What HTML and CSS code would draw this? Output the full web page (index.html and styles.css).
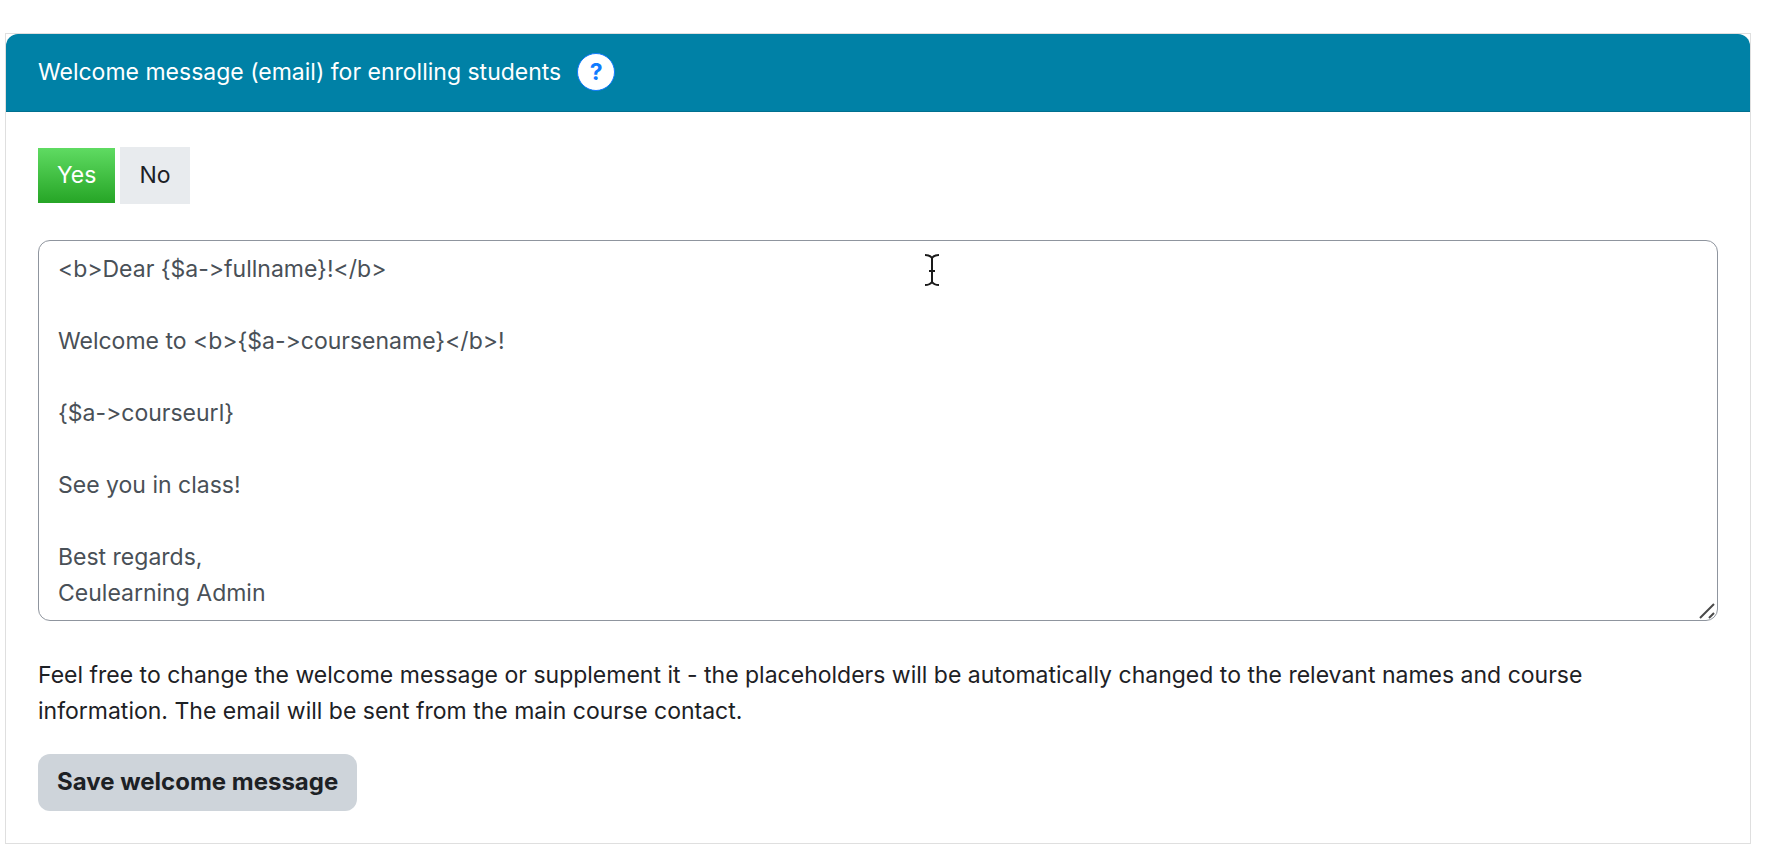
FILE: index.html
```html
<!DOCTYPE html>
<html lang="en">
<head>
    <meta charset="UTF-8">
    <meta name="viewport" content="width=device-width, initial-scale=1.0">
    <title>Welcome message</title>
    <link rel="stylesheet" href="styles.css">
</head>
<body>
    <form class="card">
        <div class="card-header">
            <label for="welcomeMessage">Welcome message (email) for enrolling students</label>
            <button type="button" class="help" aria-label="Help">?</button>
        </div>
        <div class="card-body">
            <div class="toggle">
                <button type="button" class="btn btn-yes" aria-pressed="true">Yes</button>
                <button type="button" class="btn btn-no" aria-pressed="false">No</button>
            </div>
            <div class="message">
                <textarea id="welcomeMessage" rows="10" spellcheck="false">&lt;b&gt;Dear {$a-&gt;fullname}!&lt;/b&gt;

Welcome to &lt;b&gt;{$a-&gt;coursename}&lt;/b&gt;!

{$a-&gt;courseurl}

See you in class!

Best regards,
Ceulearning Admin</textarea>
                <svg class="grip" viewBox="0 0 16 16" aria-hidden="true">
                    <path d="M1 15 15 1M10 15 15 10"/>
                </svg>
                <svg class="cursor" viewBox="0 0 16 34" aria-hidden="true">
                    <path d="M1 2Q6 2 8 5Q10 2 15 2M8 5V29M1 32Q6 32 8 29Q10 32 15 32M5 18h6"/>
                </svg>
            </div>
            <p>Feel free to change the welcome message or supplement it - the placeholders will be automatically changed to the relevant names and course information. The email will be sent from the main course contact.</p>
            <button type="submit" class="btn btn-save">Save welcome message</button>
        </div>
    </form>
</body>
</html>
```

FILE: styles.css
```css
* {
    box-sizing: border-box;
}
body {
    margin: 0;
    padding: 33px 40px 20px 5px;
    background-color: #fff;
    color: #1d2125;
    font-family: Inter, sans-serif;
    font-size: 23px;
    line-height: 36px;
}
button, textarea {
    font: inherit;
}
.card {
    border: 1px solid #dfdfdf;
}
.card-header {
    display: flex;
    align-items: center;
    gap: 16px;
    padding: 19px 32px 20px;
    background-color: #0081a6;
    border-bottom: 1px solid #00708f;
    border-radius: 12px 12px 0 0;
    color: #fff;
}
.help {
    width: 38px;
    height: 38px;
    padding: 0;
    background-color: #fff;
    border: 1px solid #0f7bff;
    border-radius: 50%;
    color: #0f7bff;
    font-weight: bold;
    line-height: 36px;
    cursor: pointer;
}
.card-body {
    padding: 35px 32px 32px;
}
.toggle {
    display: flex;
    align-items: center;
    gap: 5px;
    margin-bottom: 36px;
}
.btn {
    padding: 10px 20px;
    border: none;
    cursor: pointer;
}
.btn-yes {
    padding: 9px 19px 10px;
    background: linear-gradient(#5fdb62, #26a526);
    color: #fff;
}
.btn-no {
    padding: 10px 19px 11px;
    background-color: #e8ebee;
    color: #1d2125;
}
.message {
    position: relative;
    margin-bottom: 36px;
}
textarea {
    display: block;
    width: 100%;
    padding: 10px 19px 9px;
    background-color: #fff;
    border: 1px solid #8f959e;
    border-radius: 12px;
    color: #495057;
    /* keep -> as two characters */
    font-feature-settings: "calt" 0;
    resize: vertical;
}
textarea::-webkit-resizer {
    background: transparent;
}
.grip, .cursor {
    position: absolute;
    fill: none;
    pointer-events: none;
}
.grip {
    right: 3px;
    bottom: 2px;
    width: 16px;
    height: 16px;
    stroke: #4a4a4a;
    stroke-width: 2;
}
/* text cursor over the message */
.cursor {
    top: 13px;
    left: calc(50% + 46px);
    width: 16px;
    height: 34px;
    stroke: #1a1a1a;
    stroke-width: 2;
}
p {
    margin: 0 0 25px;
}
.btn-save {
    padding: 10px 19px 11px;
    background-color: #ced4da;
    border-radius: 12px;
    color: #1d2125;
    font-size: 24px;
    font-weight: bold;
}
```
